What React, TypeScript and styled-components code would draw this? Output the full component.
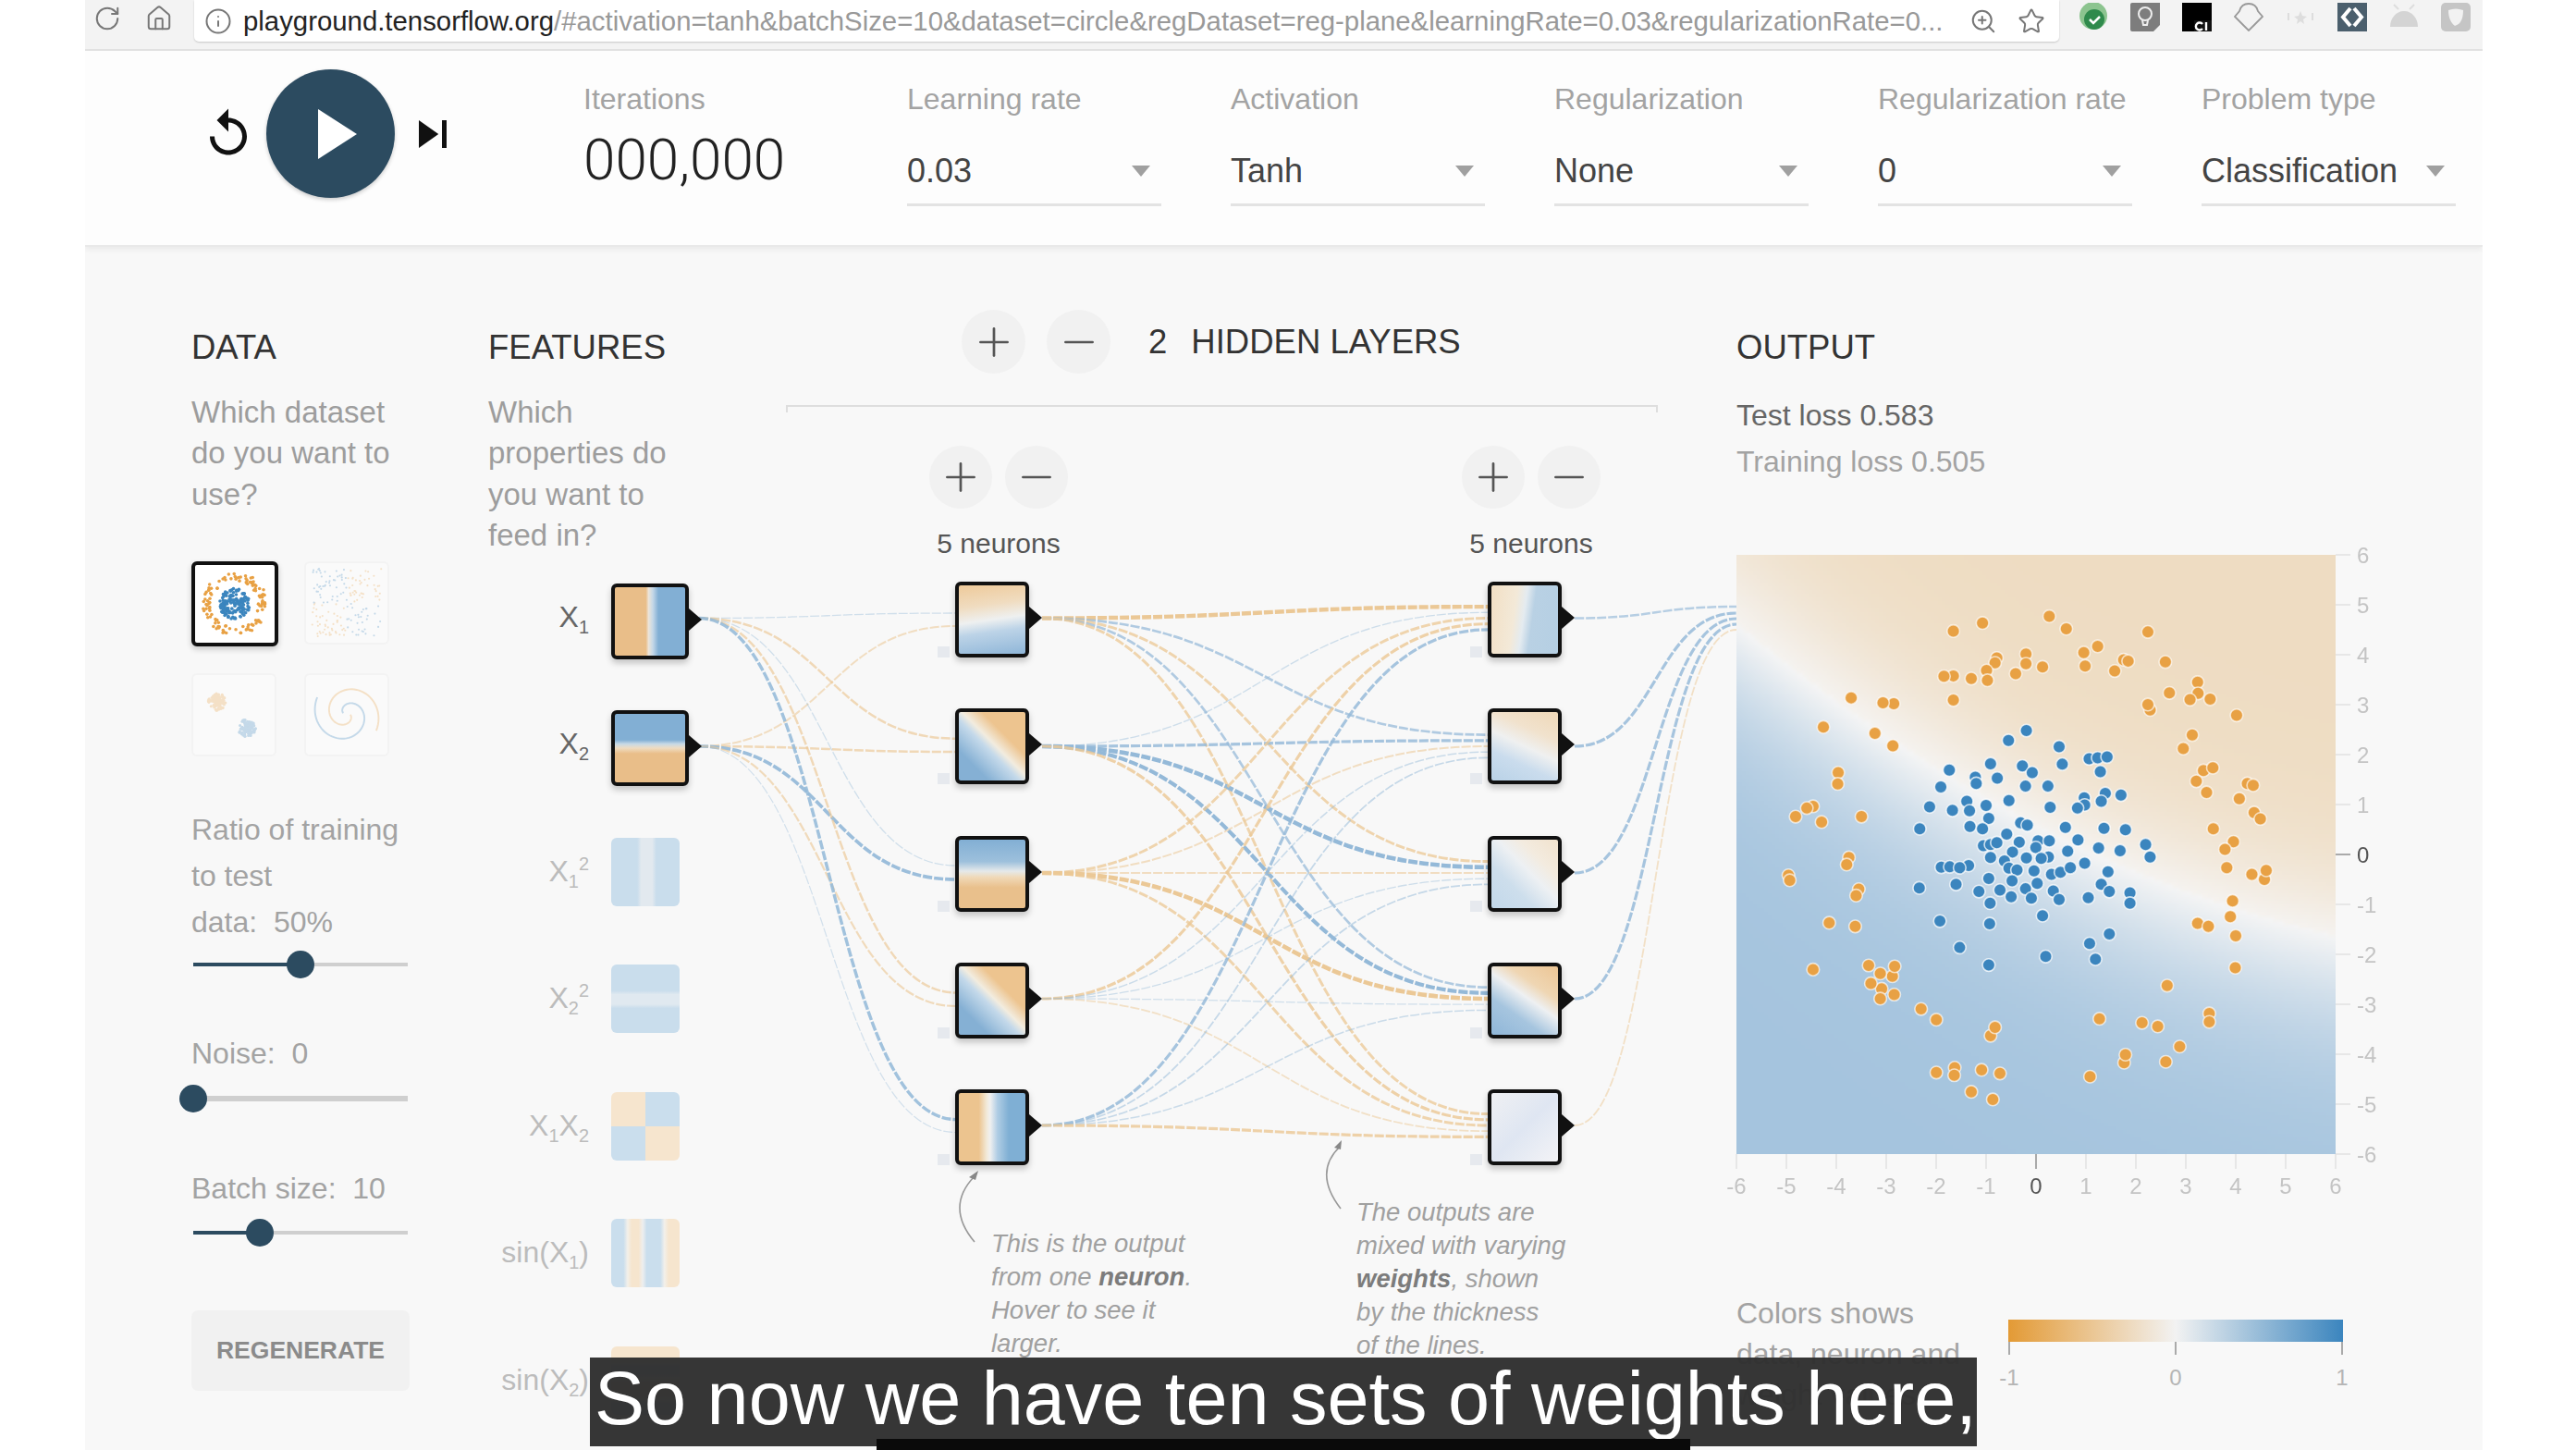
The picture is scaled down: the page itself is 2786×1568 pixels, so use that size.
import React, { useEffect, useRef } from 'react';
import styled, { createGlobalStyle } from 'styled-components';
import { RotateCw, Home, Info, ZoomIn, Star, Plus, Minus } from 'lucide-react';

const dark = '#2c4b60';
const orange = '#e8a144';
const blue = '#3b85be';
const sans = '"Liberation Sans", Arial, sans-serif';

const GlobalStyle = createGlobalStyle`
  html, body {
    margin: 0;
    background: #fff;
    font-family: ${sans};
  }
`;

const Root = styled.div`
  position: relative;
  width: 2786px;
  height: 1568px;
  overflow: hidden;
  background: #fff;
`;

const Page = styled.div`
  width: 2593px;
  height: 1568px;
  margin-left: 92px;
  display: flex;
  flex-direction: column;
  background: #f8f8f8;
  overflow: hidden;
  filter: blur(0.6px);
`;

// browser chrome
const Toolbar = styled.div`
  height: 53px;
  flex: none;
  display: flex;
  align-items: flex-start;
  padding-left: 9px;
  background: #f3f3f3;
  border-bottom: 2px solid #e2e2e2;
  color: #777;
`;

const NavIcon = styled.div`
  width: 30px;
  height: 40px;
  margin-right: 26px;
  display: flex;
  align-items: center;
`;

const Address = styled.div`
  width: 2017px;
  height: 45px;
  margin-left: -3px;
  padding: 0 15px 0 11px;
  box-sizing: border-box;
  display: flex;
  align-items: center;
  gap: 22px;
  background: #fff;
  border-radius: 0 0 5px 5px;
  box-shadow: 0 1px 2px rgba(0, 0, 0, 0.18);
`;

const Url = styled.div`
  flex: 1;
  min-width: 0;
  margin-left: -10px;
  font-size: 29.35px;
  white-space: nowrap;
  color: #999;

  b {
    font-weight: 400;
    color: #222;
  }
`;

const Extensions = styled.div`
  display: flex;
  gap: 24px;
  margin: 3px 0 0 21px;
`;

const ExtIcon = styled.svg`
  width: 32px;
  height: 31px;
  display: block;
`;

// top controls
const Header = styled.div`
  height: 210px;
  flex: none;
  display: flex;
  align-items: flex-start;
  padding-left: 125px;
  background: #fdfdfd;
  border-bottom: 2px solid #e9e9e9;
  box-shadow: 0 3px 6px rgba(0, 0, 0, 0.06);
  position: relative;
`;

const Transport = styled.div`
  display: flex;
  align-items: center;
  gap: 11px;
  margin-top: 20px;
  width: 414px;
  flex: none;
  color: #111;
`;

const PlayButton = styled.div`
  width: 139px;
  height: 139px;
  flex: none;
  border-radius: 50%;
  background: ${dark};
  display: flex;
  align-items: center;
  justify-content: center;
  box-shadow: 0 2px 4px rgba(0, 0, 0, 0.2);

  svg {
    margin-left: 14px;
  }
`;

const Field = styled.div<{ $width: number }>`
  width: ${(p) => p.$width}px;
  flex: none;
  margin-top: 32px;
  margin-right: ${(p) => (p.$width === 275 ? 75 : 0)}px;
`;

const FieldLabel = styled.div`
  font-size: 32px;
  line-height: 40px;
  color: #a3a3a3;
`;

const BigValue = styled.div`
  margin-top: 16px;
  font-family: Roboto, ${sans};
  font-weight: 300;
  font-size: 62px;
  line-height: 60px;
  color: #222;
`;

const SelectRow = styled.div`
  margin-top: 36px;
  padding-bottom: 13px;
  display: flex;
  align-items: center;
  justify-content: space-between;
  font-size: 36px;
  line-height: 44px;
  color: #444;
  border-bottom: 3px solid #e3e3e3;

  &::after {
    content: '';
    margin-right: 12px;
    border-left: 10px solid transparent;
    border-right: 10px solid transparent;
    border-top: 12px solid #a0a0a0;
  }
`;

// main area
const Main = styled.div`
  flex: 1;
  display: flex;
  min-height: 0;
`;

const SectionTitle = styled.div`
  font-size: 36.5px;
  line-height: 40px;
  color: #333;
  margin-top: 89px;
`;

const Desc = styled.div`
  margin-top: 28px;
  font-size: 33px;
  line-height: 44.4px;
  color: #9d9d9d;
`;

const DataColumn = styled.div`
  width: 321px;
  flex: none;
  margin-left: 115px;
`;

const ThumbGrid = styled.div`
  display: grid;
  grid-template-columns: 94px 92px;
  gap: 29px 28px;
  margin-top: 50px;
`;

const Thumb = styled.div<{ $selected?: boolean }>`
  width: ${(p) => (p.$selected ? 94 : 92)}px;
  height: ${(p) => (p.$selected ? 92 : 90)}px;
  box-sizing: border-box;
  background: ${(p) => (p.$selected ? '#fff' : '#fafafa')};
  border: ${(p) => (p.$selected ? '4px solid #111' : '2px solid #f3f3f3')};
  border-radius: 6px;
  box-shadow: ${(p) => (p.$selected ? '0 3px 6px rgba(0,0,0,.2)' : 'none')};

  svg {
    display: block;
    width: 100%;
    height: 100%;
    opacity: ${(p) => (p.$selected ? 1 : 0.28)};
  }
`;

const ControlLabel = styled.div<{ $gap: number }>`
  margin-top: ${(p) => p.$gap}px;
  font-size: 32px;
  line-height: 50px;
  color: #a3a3a3;
  width: 240px;
`;

const SliderWrap = styled.div<{ $gap: number }>`
  position: relative;
  height: 30px;
  width: 232px;
  margin: ${(p) => p.$gap}px 0 0 2px;
  display: flex;
  align-items: center;
`;

const Track = styled.div<{ $thick?: boolean }>`
  width: 100%;
  height: ${(p) => (p.$thick ? 6 : 4)}px;
  background: #cfcfcf;
`;

const TrackFill = styled.div`
  height: 100%;
  background: ${dark};
`;

const SliderThumb = styled.div`
  position: absolute;
  top: 0;
  width: 30px;
  height: 30px;
  margin-left: -15px;
  border-radius: 50%;
  background: ${dark};
`;

const Regenerate = styled.div`
  margin-top: 69px;
  width: 236px;
  height: 87px;
  display: flex;
  align-items: center;
  justify-content: center;
  background: #f1f1f1;
  border-radius: 7px;
  font-size: 26.5px;
  font-weight: 700;
  color: #8b8b8b;
`;

// network
const Network = styled.div`
  position: relative;
  width: 1350px;
  flex: none;
  display: flex;
`;

const LinkLayer = styled.svg`
  position: absolute;
  left: 0;
  top: 0;
  overflow: visible;
`;

const FeaturesColumn = styled.div`
  position: relative;
  width: 322px;
  flex: none;
`;

const FeatureList = styled.div`
  margin-top: 29px;
`;

const FeatureRow = styled.div`
  height: 137.5px;
  display: flex;
  align-items: flex-start;
`;

const FeatureLabel = styled.div<{ $active?: boolean }>`
  width: 109px;
  margin-right: 24px;
  text-align: right;
  font-size: 32px;
  line-height: 72px;
  white-space: nowrap;
  color: ${(p) => (p.$active ? '#666' : '#bcbcbc')};

  sub,
  sup {
    font-size: 20px;
    line-height: 0;
  }
`;

const FeatureTile = styled.div<{ $fill: string }>`
  width: 74px;
  height: 74px;
  border-radius: 6px;
  background: ${(p) => p.$fill};
`;

const NeuronBox = styled.div<{ $fill: string; $w: number; $port?: boolean }>`
  position: relative;
  width: ${(p) => p.$w}px;
  height: 82px;
  box-sizing: border-box;
  border: 4px solid #111;
  border-radius: 6px;
  background: ${(p) => p.$fill};
  box-shadow: 0 4px 7px rgba(0, 0, 0, 0.22);

  &::after {
    content: '';
    position: absolute;
    right: -18px;
    top: 23px;
    border-top: 12px solid transparent;
    border-bottom: 12px solid transparent;
    border-left: 14px solid #111;
  }

  &::before {
    content: ${(p) => (p.$port ? "''" : 'none')};
    position: absolute;
    left: -23px;
    bottom: -4px;
    width: 13px;
    height: 12px;
    background: #e6e9ee;
  }
`;

const HiddenColumn = styled.div`
  position: relative;
  flex: 1;
  min-width: 0;
`;

const LayersHead = styled.div`
  display: flex;
  align-items: center;
  margin-top: 68px;
  padding-left: 190px;
  color: #333;
  font-size: 36.5px;
  white-space: nowrap;
`;

const RoundButton = styled.div<{ $size: number }>`
  width: ${(p) => p.$size}px;
  height: ${(p) => p.$size}px;
  flex: none;
  border-radius: 50%;
  background: #f1f1f1;
  color: #555;
  display: flex;
  align-items: center;
  justify-content: center;
`;

const HeadButtons = styled.div`
  display: flex;
  gap: 23px;
`;

const LayerCount = styled.span`
  margin: 0 26px 0 41px;
`;

const Bracket = styled.div`
  width: 943px;
  height: 8px;
  margin-top: 34px;
  box-sizing: border-box;
  border: 2px solid #dedede;
  border-bottom: 0;
`;

const Layers = styled.div`
  display: flex;
  gap: 426px;
  padding-left: 155px;
  margin-top: 36px;
`;

const LayerColumn = styled.div`
  width: 150px;
  flex: none;
`;

const LayerButtons = styled.div`
  display: flex;
  gap: 14px;
`;

const NeuronCount = styled.div`
  margin-top: 18px;
  text-align: center;
  font-size: 30px;
  line-height: 40px;
  color: #555;
`;

const NeuronList = styled.div`
  margin-top: 21px;
  padding-left: 28px;
`;

const NeuronRow = styled.div`
  height: 137.25px;
`;

const Annotation = styled.div<{ $left: number; $top: number }>`
  position: absolute;
  left: ${(p) => p.$left}px;
  top: ${(p) => p.$top}px;
  width: 270px;
  font-size: 27.5px;
  line-height: 36px;
  font-style: italic;
  color: #a0a0a0;

  b {
    color: #7c7c7c;
  }
`;

// output
const OutputColumn = styled.div`
  flex: 1;
  min-width: 0;
`;

const LossRow = styled.div<{ $strong?: boolean }>`
  font-size: 32px;
  line-height: 50px;
  color: ${(p) => (p.$strong ? '#666' : '#a3a3a3')};
`;

const LossBlock = styled.div`
  margin-top: 28px;
`;

const Chart = styled.div`
  position: relative;
  width: 648px;
  height: 648px;
  margin-top: 76px;
`;

const ChartCanvas = styled.canvas`
  display: block;
  width: 648px;
  height: 648px;
`;

const ChartOverlay = styled.svg`
  position: absolute;
  left: 0;
  top: 0;
  overflow: visible;

  text {
    font-family: ${sans};
    font-size: 24px;
    fill: #c4c4c4;
  }
`;

const Legend = styled.div`
  display: flex;
  margin-top: 150px;
`;

const LegendText = styled.div`
  width: 294px;
  flex: none;
  font-size: 32px;
  line-height: 44px;
  color: #a3a3a3;
`;

const LegendScale = styled.svg`
  margin-top: 29px;
  overflow: visible;

  text {
    font-family: ${sans};
    font-size: 24px;
    fill: #b5b5b5;
    text-anchor: middle;
  }
`;

// video caption
const Caption = styled.div`
  position: absolute;
  left: 638px;
  top: 1468px;
  width: 1500px;
  height: 96px;
  box-sizing: border-box;
  padding-left: 5px;
  background: rgba(46, 46, 46, 0.96);
  color: #fff;
  font-size: 81px;
  line-height: 88px;
  white-space: nowrap;
`;

const CaptionEdge = styled.div`
  position: absolute;
  left: 948px;
  top: 1556px;
  width: 880px;
  height: 12px;
  background: #0a0a0a;
`;

const rng = (seed: number) => {
  let s = seed;
  return () => {
    s = (s * 16807) % 2147483647;
    return s / 2147483647;
  };
};

type Pt = [number, number, string];

const circlePts = (() => {
  const r = rng(11);
  const pts: Pt[] = [];
  for (let i = 0; i < 120; i++) {
    const a = r() * Math.PI * 2;
    const d = 27 + r() * 10;
    pts.push([45 + Math.cos(a) * d, 45 + Math.sin(a) * d, orange]);
  }
  for (let i = 0; i < 150; i++) {
    const a = r() * Math.PI * 2;
    const d = Math.sqrt(r()) * 18;
    pts.push([45 + Math.cos(a) * d, 45 + Math.sin(a) * d, blue]);
  }
  return pts;
})();

const xorPts = (() => {
  const r = rng(29);
  const pts: Pt[] = [];
  for (let i = 0; i < 170; i++) {
    const x = 6 + r() * 78;
    const y = 6 + r() * 78;
    pts.push([x, y, x < 45 === y < 45 ? blue : orange]);
  }
  return pts;
})();

const gaussPts = (() => {
  const r = rng(47);
  const pts: Pt[] = [];
  for (let i = 0; i < 120; i++) {
    const a = r() * Math.PI * 2;
    const d = r() * 10;
    pts.push([26 + Math.cos(a) * d, 30 + Math.sin(a) * d, orange]);
    pts.push([60 + Math.cos(a + 1) * d, 60 + Math.sin(a + 1) * d, blue]);
  }
  return pts;
})();

const spiralPath = (turn: number) => {
  let d = '';
  for (let i = 0; i <= 70; i++) {
    const t = (i / 70) * 2.1 * Math.PI + 0.2;
    const rad = 3 + t * 5.2;
    d += `${i ? 'L' : 'M'}${45 + Math.cos(t + turn) * rad} ${44 + Math.sin(t + turn) * rad} `;
  }
  return d;
};

const DotSet = ({ pts, r = 1.5 }: { pts: Pt[]; r?: number }) => (
  <svg viewBox="0 0 90 90">
    {pts.map((p, i) => (
      <circle key={i} cx={p[0]} cy={p[1]} r={r} fill={p[2]} />
    ))}
  </svg>
);

const orangeDots = [
  [735, 179], [773, 207], [586, 194], [521, 212], [955, 214], [843, 246], [812, 260], [683, 263], [683, 285],
  [720, 292], [815, 290], [618, 272], [614, 283], [595, 300], [597, 322], [660, 307], [561, 318], [521, 312],
  [500, 313], [881, 301], [901, 276], [911, 279], [994, 281], [1066, 326], [1067, 351], [1049, 365], [1094, 364],
  [1003, 350], [960, 388], [955, 376], [1153, 400], [521, 366], [293, 361], [388, 374], [364, 372], [231, 426],
  [346, 440], [386, 468], [1054, 444], [1034, 474], [1079, 523], [1100, 517], [1063, 547], [1086, 572], [1177, 552],
  [1190, 556], [1159, 586], [1192, 617], [1206, 631], [264, 528], [263, 553], [208, 603], [194, 607], [169, 626],
  [227, 638], [316, 626], [1101, 653], [1146, 682], [1127, 699], [288, 717], [283, 733], [153, 757], [156, 768],
  [1131, 740], [1215, 766], [1219, 746], [1187, 755], [310, 788], [304, 802], [1144, 814], [1139, 849], [1151, 892],
  [1066, 864], [1090, 871], [244, 863], [302, 871], [208, 967], [332, 958], [385, 982], [390, 960], [358, 976],
  [361, 1010], [337, 998], [358, 1032], [389, 1023], [1150, 963], [998, 1003], [449, 1055], [483, 1079], [847, 1077],
  [942, 1086], [977, 1094], [1092, 1065], [1092, 1084], [1026, 1139], [902, 1175], [905, 1157], [995, 1173], [826, 1206],
  [604, 1115], [614, 1096], [483, 1197], [524, 1186], [523, 1203], [584, 1191], [625, 1199], [561, 1240], [609, 1257],
];

const blueDots = [
  [684, 434], [644, 456], [757, 470], [604, 508], [764, 509], [824, 497], [843, 495], [864, 493], [512, 522],
  [675, 513], [697, 528], [849, 526], [619, 540], [570, 538], [572, 552], [493, 560], [682, 558], [732, 558],
  [860, 574], [895, 578], [813, 584], [851, 592], [645, 590], [551, 592], [594, 601], [737, 605], [468, 604],
  [519, 612], [557, 613], [814, 600], [798, 607], [600, 630], [671, 640], [686, 645], [558, 648], [586, 653],
  [771, 650], [857, 652], [905, 655], [446, 653], [640, 665], [668, 683], [710, 680], [735, 680], [799, 678],
  [588, 691], [604, 688], [618, 684], [705, 695], [950, 688], [845, 696], [653, 705], [776, 703], [893, 702],
  [960, 716], [604, 717], [684, 718], [733, 716], [717, 719], [635, 725], [555, 735], [814, 730], [494, 739],
  [513, 738], [535, 740], [645, 741], [663, 745], [701, 747], [740, 755], [760, 750], [782, 740], [866, 749],
  [600, 764], [652, 769], [708, 775], [527, 777], [851, 777], [445, 785], [682, 787], [625, 790], [578, 793],
  [744, 792], [869, 793], [915, 796], [650, 805], [695, 808], [757, 811], [822, 807], [603, 819], [915, 819],
  [720, 847], [491, 859], [602, 865], [869, 888], [825, 909], [535, 918], [838, 944], [727, 938], [600, 957],
];

const chartX = (z: number) => (z - 37) / 2.063;
const chartY = (z: number) => (z - 42) / 2.063;

const mix = (a: number[], b: number[], t: number) => a.map((v, i) => v + (b[i] - v) * t);

const OutputHeatmap = () => {
  const ref = useRef<HTMLCanvasElement>(null);
  useEffect(() => {
    const ctx = ref.current?.getContext('2d');
    if (!ctx) return;
    const n = 162;
    const img = ctx.createImageData(n, n);
    for (let j = 0; j < n; j++) {
      for (let i = 0; i < n; i++) {
        const x = (i / (n - 1)) * 12 - 6;
        const y = 6 - (j / (n - 1)) * 12;
        const g = 0.6 - 0.52 * x + 0.025 * x * x;
        const d = y - g;
        let c: number[];
        if (d > 0) {
          c = mix([245, 243, 240], [238, 220, 194], Math.tanh(d / (1.9 + Math.max(0, -x) * 0.1)));
        } else {
          c = mix([245, 245, 245], [165, 196, 222], Math.tanh(-d / 2.6));
        }
        const k = (j * n + i) * 4;
        img.data[k] = c[0];
        img.data[k + 1] = c[1];
        img.data[k + 2] = c[2];
        img.data[k + 3] = 255;
      }
    }
    ctx.putImageData(img, 0, 0);
  }, []);
  return <ChartCanvas ref={ref} width={162} height={162} />;
};

const ticks = [-6, -5, -4, -3, -2, -1, 0, 1, 2, 3, 4, 5, 6];

const ChartMarks = () => (
  <ChartOverlay width={648} height={648}>
    {ticks.map((t) => {
      const p = (t + 6) * 54;
      const q = (6 - t) * 54;
      const zero = t === 0;
      return (
        <g key={t}>
          <line x1={p} x2={p} y1={648} y2={664} stroke={zero ? '#aaa' : '#e2e2e2'} strokeWidth={zero ? 2 : 1.5} />
          <line x1={648} x2={664} y1={q} y2={q} stroke={zero ? '#aaa' : '#e2e2e2'} strokeWidth={zero ? 2 : 1.5} />
          <text x={p} y={691} textAnchor="middle" style={zero ? { fill: '#555' } : undefined}>
            {t}
          </text>
          <text x={671} y={q + 9} style={zero ? { fill: '#555' } : undefined}>
            {t}
          </text>
        </g>
      );
    })}
    {orangeDots.map(([x, y], i) => (
      <circle key={`o${i}`} cx={chartX(x)} cy={chartY(y)} r={6.8} fill={orange} stroke="#fff" strokeOpacity={0.65} strokeWidth={1.6} />
    ))}
    {blueDots.map(([x, y], i) => (
      <circle key={`b${i}`} cx={chartX(x)} cy={chartY(y)} r={6.8} fill={blue} stroke="#fff" strokeOpacity={0.75} strokeWidth={1.6} />
    ))}
  </ChartOverlay>
);

const ox = 528;
const oy = 267;
const rowY = [668.5, 807, 944, 1080, 1217];

const curve = (x1: number, y1: number, x2: number, y2: number) => {
  const mx = (x1 + x2) / 2;
  return `M${x1 - ox} ${y1 - oy} C${mx - ox} ${y1 - oy} ${mx - ox} ${y2 - oy} ${x2 - ox} ${y2 - oy}`;
};

const inputLinks = [
  [0, 663, 0.1], [1, 677, -0.25],
  [0, 798.7, -0.35], [1, 813, -0.35],
  [0, 936, 0.1], [1, 951, 0.6],
  [0, 1073.5, -0.35], [1, 1088, -0.3],
  [0, 1210.6, 0.55], [1, 1224.5, 0.08],
];

const weights = [
  [-0.75, 0.4, -0.45, 0.4, -0.45],
  [0.12, 0.5, 0.8, 0.7, -0.5],
  [-0.45, -0.25, -0.25, -0.8, -0.45],
  [-0.5, 0.15, 0.12, 0.1, -0.2],
  [0.5, 0.2, 0.2, 0.15, -0.5],
];

const outputLinks = [
  [0, 656, 0.35], [1, 663, 0.5], [2, 669, 0.5], [3, 675, 0.5], [4, 681, -0.2],
];

const Link = ({ d, w }: { d: string; w: number }) => (
  <path
    d={d}
    fill="none"
    stroke={w > 0 ? '#94b9d8' : '#ebc896'}
    strokeOpacity={Math.min(1, 0.3 + Math.abs(w) * 1.05)}
    strokeWidth={0.8 + Math.abs(w) * 4.8}
    strokeDasharray="10 2"
  />
);

const NetworkLinks = () => (
  <LinkLayer width={1350} height={1301}>
    {inputLinks.map(([src, y2, w], i) => (
      <Link key={`i${i}`} d={curve(756, rowY[src], 1034, y2)} w={w} />
    ))}
    {weights.map((row, i) =>
      row.map((w, j) => <Link key={`h${i}${j}`} d={curve(1127, rowY[i], 1609, rowY[j] + (i - 2) * 6.2)} w={w} />)
    )}
    {outputLinks.map(([src, y2, w], i) => (
      <Link key={`o${i}`} d={curve(1703, rowY[src], 1878, y2)} w={w} />
    ))}
    <path d={`M${1054 - ox} ${1343 - oy} Q${1022 - ox} ${1305 - oy} ${1054 - ox} ${1272 - oy}`} fill="none" stroke="#999" strokeWidth={1.6} />
    <path d={`M${1058 - ox} ${1266 - oy} l-10 7 l7 3 z`} fill="#888" />
    <path d={`M${1450 - ox} ${1307 - oy} Q${1420 - ox} ${1268 - oy} ${1449 - ox} ${1240 - oy}`} fill="none" stroke="#999" strokeWidth={1.6} />
    <path d={`M${1451 - ox} ${1233 - oy} l-8 8 l7 2 z`} fill="#888" />
  </LinkLayer>
);

const O = '#e9be89';
const B = '#82afd4';

const features = [
  { label: <>X<sub>1</sub></>, active: true, fill: `linear-gradient(90deg,${O} 0 44%,#ece4d8 48%,#c5d8e8 54%,${B} 62%)` },
  { label: <>X<sub>2</sub></>, active: true, fill: `linear-gradient(180deg,${B} 0 38%,#c8d9e6 44%,#efdcc2 50%,${O} 58%)` },
  { label: <>X<sub>1</sub><sup>2</sup></>, fill: 'linear-gradient(90deg,#c9ddec 0 38%,#e2e9ef 44% 60%,#c9ddec 66%)' },
  { label: <>X<sub>2</sub><sup>2</sup></>, fill: 'linear-gradient(180deg,#c9ddec 0 38%,#e0e9f0 44% 58%,#c9ddec 64%)' },
  { label: <>X<sub>1</sub>X<sub>2</sub></>, fill: 'conic-gradient(#cadeed 0 25%,#f6e5ce 25% 50%,#cadeed 50% 75%,#f6e5ce 75%)' },
  { label: <>sin(X<sub>1</sub>)</>, fill: 'linear-gradient(90deg,#cadeed 0 18%,#f3f0ea 24%,#f6e5ce 30% 40%,#eeeeee 46%,#cadeed 52% 72%,#f3f0ea 78%,#f6e5ce 84%)' },
  { label: <>sin(X<sub>2</sub>)</>, fill: 'linear-gradient(180deg,#f6e5ce 0 18%,#f3f0ea 24%,#cadeed 30% 40%,#eeeeee 46%,#f6e5ce 52% 72%,#f3f0ea 78%,#cadeed 84%)' },
];

const diagonal = `linear-gradient(225deg,#edc48f 0 32%,#f2ecdf 47%,#c4d9ea 55%,#85b0d4 78%)`;

const layerOne = [
  'linear-gradient(172deg,#eeca9a 0,#f0dcc0 30%,#eef0f0 50%,#bcd3e7 66%,#8fb6d8 100%)',
  diagonal,
  'linear-gradient(180deg,#82afd4 0,#9dc0dc 32%,#e5e9ea 46%,#f0d9b8 55%,#e9c08c 70%)',
  diagonal,
  'linear-gradient(90deg,#ecc48f 0 30%,#f2ead9 42%,#f0f0f0 47%,#b0cde4 58%,#7fafd4 75%)',
];

const layerTwo = [
  'linear-gradient(98deg,#f2dfc4 0,#f3e9d8 35%,#e4ebf0 48%,#b9d1e4 60%,#b5cfe3 100%)',
  'linear-gradient(205deg,#efd8b8 0,#f1e2cd 30%,#eff0f0 50%,#cadced 70%,#b9d2e7 100%)',
  'linear-gradient(225deg,#f1e2cd 0,#f3ebdf 28%,#edf0f3 45%,#cddeec 68%,#c2d8ea 100%)',
  'linear-gradient(215deg,#ecc594 0,#efd6b3 30%,#eef0f2 46%,#a6c5df 68%,#8fb6d8 100%)',
  'linear-gradient(135deg,#eff0f3 0,#dfe6f2 50%,#f3f3f6 100%)',
];

const Slider = ({ pct, thick, gap }: { pct: number; thick?: boolean; gap: number }) => (
  <SliderWrap $gap={gap}>
    <Track $thick={thick}>
      <TrackFill style={{ width: `${pct}%` }} />
    </Track>
    <SliderThumb style={{ left: `${pct}%` }} />
  </SliderWrap>
);

const selects = [
  ['Learning rate', '0.03'],
  ['Activation', 'Tanh'],
  ['Regularization', 'None'],
  ['Regularization rate', '0'],
];

const LayerBlock = ({ fills, count }: { fills: string[]; count: string }) => (
  <LayerColumn>
    <LayerButtons>
      <RoundButton $size={68}>
        <Plus size={50} strokeWidth={1.3} />
      </RoundButton>
      <RoundButton $size={68}>
        <Minus size={50} strokeWidth={1.3} />
      </RoundButton>
    </LayerButtons>
    <NeuronCount>{count}</NeuronCount>
    <NeuronList>
      {fills.map((f, i) => (
        <NeuronRow key={i}>
          <NeuronBox $fill={f} $w={80} $port />
        </NeuronRow>
      ))}
    </NeuronList>
  </LayerColumn>
);

export default function App() {
  return (
    <Root>
      <GlobalStyle />
      <Page>
        <Toolbar>
          <NavIcon><RotateCw size={30} strokeWidth={1.6} /></NavIcon>
          <NavIcon><Home size={30} strokeWidth={1.6} /></NavIcon>
          <Address>
            <Info size={30} strokeWidth={1.6} />
            <Url>
              <b>playground.tensorflow.org</b>/#activation=tanh&amp;batchSize=10&amp;dataset=circle&amp;regDataset=reg-plane&amp;learningRate=0.03&amp;regularizationRate=0...
            </Url>
            <ZoomIn size={30} strokeWidth={1.6} />
            <Star size={30} strokeWidth={1.6} />
          </Address>
          <Extensions>
            <ExtIcon viewBox="0 0 32 31">
              <circle cx="16" cy="14" r="15" fill="#8cc48f" />
              <circle cx="17" cy="18" r="11" fill="#2f8a4c" />
              <path d="M12 18l4 4 7-7" stroke="#fff" strokeWidth="2.5" fill="none" />
            </ExtIcon>
            <ExtIcon viewBox="0 0 32 31">
              <path d="M0 2q0-2 2-2h30v24l-7 7H2q-2 0-2-2z" fill="#7d7d7d" />
              <circle cx="16" cy="12" r="7" fill="none" stroke="#eee" strokeWidth="2" />
              <path d="M13 19l1 5h4l1-5" fill="none" stroke="#eee" strokeWidth="2" />
            </ExtIcon>
            <ExtIcon viewBox="0 0 32 31">
              <rect width="32" height="31" fill="#000" />
              <rect x="13" y="19" width="19" height="12" fill="#111" />
              <path d="M22 23a4 4 0 1 0 0 5M26 21v9" stroke="#fff" strokeWidth="2.4" fill="none" />
            </ExtIcon>
            <ExtIcon viewBox="0 0 32 31">
              <path d="M16 1c6 0 9 4 10 8l5 6-9 9-6 6-6-6-9-9 5-6c1-4 4-8 10-8z" fill="none" stroke="#999" strokeWidth="1.8" />
            </ExtIcon>
            <ExtIcon viewBox="0 0 32 31">
              <path d="M3 11v8M29 11v8" stroke="#ddd" strokeWidth="2" />
              <path d="M16 9l2 5 5 1-4 3 1 5-4-3-4 3 1-5-4-3 5-1z" fill="#ddd" />
            </ExtIcon>
            <ExtIcon viewBox="0 0 32 31">
              <rect width="32" height="31" fill="#4b5f6d" />
              <path d="M14 6l-8 9.500 8 9.500M18 6l8 9.500-8 9.500" stroke="#fff" strokeWidth="4" fill="none" />
            </ExtIcon>
            <ExtIcon viewBox="0 0 32 31">
              <path d="M1 26c0-9 6-17 15-17s15 8 15 17z" fill="#d4d4d4" />
              <path d="M5 2l5 5M27 2l-5 5" stroke="#ddd" strokeWidth="2" />
            </ExtIcon>
            <ExtIcon viewBox="0 0 32 31">
              <rect width="32" height="31" rx="5" fill="#c5c5c5" />
              <path d="M8 8q8-3 16 0c0 10-3 15-9 17-5-4-7-10-7-17z" fill="#f2f2f2" />
            </ExtIcon>
          </Extensions>
        </Toolbar>

        <Header>
          <Transport>
            <svg width="60" height="60" viewBox="0 0 24 24" fill="currentColor">
              <path d="M12 5V1L7 6l5 5V7c3.310 0 6 2.690 6 6s-2.690 6-6 6-6-2.690-6-6H4c0 4.420 3.580 8 8 8s8-3.580 8-8-3.580-8-8-8z" />
            </svg>
            <PlayButton>
              <svg width="42" height="54" viewBox="0 0 42 54">
                <path d="M0 0l42 27L0 54z" fill="#fff" />
              </svg>
            </PlayButton>
            <svg width="60" height="60" viewBox="0 0 24 24" fill="currentColor">
              <path d="M6 18l8.500-6L6 6v12zM16 6v12h2V6h-2z" />
            </svg>
          </Transport>
          <Field $width={350}>
            <FieldLabel>Iterations</FieldLabel>
            <BigValue>000,000</BigValue>
          </Field>
          {selects.map(([label, value]) => (
            <Field $width={275} key={label}>
              <FieldLabel>{label}</FieldLabel>
              <SelectRow>{value}</SelectRow>
            </Field>
          ))}
          <Field $width={275}>
            <FieldLabel>Problem type</FieldLabel>
            <SelectRow>Classification</SelectRow>
          </Field>
        </Header>

        <Main>
          <DataColumn>
            <SectionTitle>DATA</SectionTitle>
            <Desc>
              Which dataset
              <br />
              do you want to
              <br />
              use?
            </Desc>
            <ThumbGrid>
              <Thumb $selected><DotSet pts={circlePts} r={1.9} /></Thumb>
              <Thumb><DotSet pts={xorPts} r={1.1} /></Thumb>
              <Thumb><DotSet pts={gaussPts} r={1.6} /></Thumb>
              <Thumb>
                <svg viewBox="0 0 90 90">
                  <path d={spiralPath(0)} fill="none" stroke={orange} strokeWidth="2" />
                  <path d={spiralPath(Math.PI)} fill="none" stroke={blue} strokeWidth="2" />
                </svg>
              </Thumb>
            </ThumbGrid>
            <ControlLabel $gap={54}>
              Ratio of training
              <br />
              to test
              <br />
              data:&nbsp; 50%
            </ControlLabel>
            <Slider pct={50} gap={6} />
            <ControlLabel $gap={56}>Noise:&nbsp; 0</ControlLabel>
            <Slider pct={0} thick gap={9} />
            <ControlLabel $gap={57}>Batch size:&nbsp; 10</ControlLabel>
            <Slider pct={31} gap={8} />
            <Regenerate>REGENERATE</Regenerate>
          </DataColumn>

          <Network>
            <NetworkLinks />
            <FeaturesColumn>
              <SectionTitle>FEATURES</SectionTitle>
              <Desc>
                Which
                <br />
                properties do
                <br />
                you want to
                <br />
                feed in?
              </Desc>
              <FeatureList>
                {features.map((f, i) => (
                  <FeatureRow key={i}>
                    <FeatureLabel $active={f.active}>{f.label}</FeatureLabel>
                    {f.active ? <NeuronBox $fill={f.fill} $w={84} /> : <FeatureTile $fill={f.fill} />}
                  </FeatureRow>
                ))}
              </FeatureList>
            </FeaturesColumn>
            <HiddenColumn>
              <LayersHead>
                <HeadButtons>
                  <RoundButton $size={69}>
                    <Plus size={50} strokeWidth={1.3} />
                  </RoundButton>
                  <RoundButton $size={69}>
                    <Minus size={50} strokeWidth={1.3} />
                  </RoundButton>
                </HeadButtons>
                <LayerCount>2</LayerCount>
                HIDDEN LAYERS
              </LayersHead>
              <Bracket />
              <Layers>
                <LayerBlock fills={layerOne} count="5 neurons" />
                <LayerBlock fills={layerTwo} count="5 neurons" />
              </Layers>
            </HiddenColumn>
            <Annotation $left={544} $top={1060}>
              This is the output
              <br />
              from one <b>neuron</b>.
              <br />
              Hover to see it
              <br />
              larger.
            </Annotation>
            <Annotation $left={939} $top={1026}>
              The outputs are
              <br />
              mixed with varying
              <br />
              <b>weights</b>, shown
              <br />
              by the thickness
              <br />
              of the lines.
            </Annotation>
          </Network>

          <OutputColumn>
            <SectionTitle>OUTPUT</SectionTitle>
            <LossBlock>
              <LossRow $strong>Test loss 0.583</LossRow>
              <LossRow>Training loss 0.505</LossRow>
            </LossBlock>
            <Chart>
              <OutputHeatmap />
              <ChartMarks />
            </Chart>
            <Legend>
              <LegendText>
                Colors shows
                <br />
                data, neuron and
                <br />
                weight values.
              </LegendText>
              <LegendScale width={362} height={80}>
                <defs>
                  <linearGradient id="legendFill">
                    <stop offset="0" stopColor="#e39a35" />
                    <stop offset="0.5" stopColor="#f2f2f2" />
                    <stop offset="1" stopColor="#3b85be" />
                  </linearGradient>
                </defs>
                <rect width="362" height="24" fill="url(#legendFill)" />
                <path d="M1 24v14M181 24v14M361 24v14" stroke="#aaa" strokeWidth="2" />
                <text x="1" y="71">-1</text>
                <text x="181" y="71">0</text>
                <text x="361" y="71">1</text>
              </LegendScale>
            </Legend>
          </OutputColumn>
        </Main>
      </Page>
      <Caption>So now we have ten sets of weights here,</Caption>
      <CaptionEdge />
    </Root>
  );
}
